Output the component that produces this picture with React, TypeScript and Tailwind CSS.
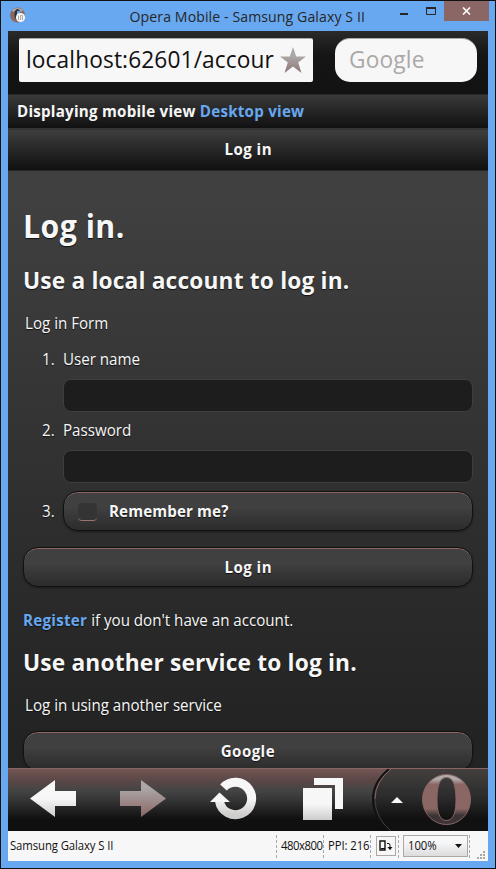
import React from "react";

function Narrow({ children, className = "" }: { children: React.ReactNode; className?: string }) {
  return <span className={`inline-block origin-left scale-x-[0.945] whitespace-nowrap ${className}`}>{children}</span>;
}

function CenterLabel({ children }: { children: React.ReactNode }) {
  return <span className="inline-block scale-x-[0.94] tracking-[0.5px]">{children}</span>;
}

function TitleBar() {
  return (
    <div className="relative flex h-[30px] shrink-0 items-center justify-center text-[15px] text-[#262626]">
      <svg className="absolute left-[1px] top-[6px]" width="18" height="17" viewBox="0 0 18 17">
        <ellipse cx="8.500" cy="8" rx="7.500" ry="7.500" fill="#8a6664" />
        <path d="M3 3Q8-1 14 3L12 5Q8 2 4 5Z" fill="#aca8a8" />
        <ellipse cx="8.500" cy="7.500" rx="3" ry="5.500" fill="#303030" />
        <path d="M8 4v5l3-2V4Z" fill="#68a8f0" />
        <circle cx="11.500" cy="10.500" r="4.600" fill="#f7f7f7" />
        <path d="M9.500 13V8.500M11.500 13V8.500h2V13" stroke="#aca8a8" fill="none" />
      </svg>
      <span className="relative -left-px inline-block scale-x-[0.94] tracking-[0.1px]">Opera Mobile - Samsung Galaxy S II</span>
      <div className="absolute right-0 top-0 flex h-5">
        <svg width="45" height="20" viewBox="0 0 45 20">
          <path d="M1 12h8v2H1Z" fill="#262626" />
          <path d="M27.500 6.500h9v7h-9Z" fill="none" stroke="#262626" />
          <path d="M27 6h10v2h-10Z" fill="#262626" />
        </svg>
        <div className="flex h-5 w-[45px] items-center justify-center bg-[#8a6664]">
          <svg width="9" height="8" viewBox="0 0 9 8">
            <path d="M1 .5 8 7.500M8 .5 1 7.500" stroke="#f7f7f7" strokeWidth="1.700" />
          </svg>
        </div>
      </div>
    </div>
  );
}

function AddressBar() {
  return (
    <div className="flex h-[63px] shrink-0 items-start bg-linear-to-b from-[#2a2a2a] via-[#151515] via-40% to-[#121212] pl-[11px] pt-[7px] text-[24px]">
      <div className="flex h-[44px] w-[294px] items-center rounded-[2px] border-t border-[#aca8a8] bg-[#f7f7f7] pl-[7px] text-[#111]">
        <div className="w-[250px] pb-[3px]">
          <Narrow className="tracking-[0.13px]">localhost:62601/accour</Narrow>
        </div>
        <svg className="ml-[3px] shrink-0" width="28" height="28" viewBox="0 0 28 28">
          <defs>
            <linearGradient id="star" x2="0" y2="1">
              <stop offset=".35" stopColor="#aca8a8" />
              <stop offset="1" stopColor="#8c7472" />
            </linearGradient>
          </defs>
          <path d="M14 0 17.200 9.500H27L19.200 15.500 22.500 26 14 19.500 5.500 26 8.800 15.500 1 9.500H10.800Z" fill="url(#star)" />
        </svg>
      </div>
      <div className="ml-[22px] flex h-[44px] w-[142px] items-center rounded-[15px] border-t border-[#aca8a8] bg-[#f7f7f7] pb-[3px] pl-[14px] text-[#aca8a8]">
        <Narrow className="tracking-[0.2px]">Google</Narrow>
      </div>
    </div>
  );
}

function Button({ children, className = "" }: { children: React.ReactNode; className?: string }) {
  return (
    <div className={`flex h-10 shrink-0 items-center rounded-[15px] border border-[#111] bg-linear-to-b from-[#404040] from-40% to-[#2c2c2c] font-bold shadow-[inset_0_1px_0_#8a6664,0_1px_2px_#1a1a1a] ${className}`}>
      {children}
    </div>
  );
}

function Field() {
  return <div className="h-[33px] w-full shrink-0 rounded-[8px] border border-[#3e3e3e] bg-[#1d1d1d]" />;
}

function PageBody() {
  return (
    <div className="flex h-[597px] shrink-0 flex-col overflow-hidden bg-linear-to-b from-[#404040] from-5% via-[#313131] via-50% to-[#232323] to-95% px-[15px] text-[16px] text-[#f7f7f7] [text-shadow:0_1px_1px_#111]">
      <h1 className="mt-[35px] h-10 shrink-0 text-[32px] font-bold leading-10 tracking-[0.5px]">
        <Narrow>Log in.</Narrow>
      </h1>
      <h2 className="mt-[18px] h-8 shrink-0 text-[24px] font-bold leading-8 tracking-[0.2px]">
        <Narrow>Use a local account to log in.</Narrow>
      </h2>
      <div className="mt-[17px] h-5 shrink-0 pl-[2px] leading-5">
        <Narrow>Log in Form</Narrow>
      </div>
      <ol className="flex shrink-0 flex-col pt-4">
        <li className="flex">
          <span className="w-[40px] shrink-0 pl-[19px] leading-5">
            <Narrow>1.</Narrow>
          </span>
          <div className="flex flex-1 flex-col gap-[10px]">
            <label className="h-5 leading-5">
              <Narrow>User name</Narrow>
            </label>
            <Field />
          </div>
        </li>
        <li className="mt-[8px] flex">
          <span className="w-[40px] shrink-0 pl-[19px] leading-5">
            <Narrow>2.</Narrow>
          </span>
          <div className="flex flex-1 flex-col gap-[10px]">
            <label className="h-5 leading-5">
              <Narrow>Password</Narrow>
            </label>
            <Field />
          </div>
        </li>
        <li className="mt-[8px] flex items-center">
          <span className="w-[40px] shrink-0 pl-[19px] leading-5">
            <Narrow>3.</Narrow>
          </span>
          <Button className="flex-1 pl-[14px]">
            <span className="mr-[12px] mt-[2px] h-[18px] w-[19px] rounded-[4px] border-b border-[#9a7472] bg-[#343434]" />
            <Narrow className="tracking-[0.15px]">Remember me?</Narrow>
          </Button>
        </li>
      </ol>
      <Button className="mt-4 justify-center">
        <CenterLabel>Log in</CenterLabel>
      </Button>
      <p className="mt-[23px] h-5 shrink-0 leading-5">
        <Narrow>
          <b className="tracking-[0.3px] text-[#68a8f0]">Register</b> if you don't have an account.
        </Narrow>
      </p>
      <h2 className="mt-4 h-8 shrink-0 text-[24px] font-bold leading-8 tracking-[0.2px]">
        <Narrow>Use another service to log in.</Narrow>
      </h2>
      <div className="mt-[17px] h-5 shrink-0 pl-[2px] leading-5">
        <Narrow>Log in using another service</Narrow>
      </div>
      <Button className="mt-4 justify-center">
        <CenterLabel>Google</CenterLabel>
      </Button>
    </div>
  );
}

function NavBar() {
  return (
    <svg className="block shrink-0" width="480" height="63" viewBox="8 768 480 63">
      <defs>
        <linearGradient id="bar" x2="0" y2="1">
          <stop offset="0" stopColor="#755756" />
          <stop offset=".2" stopColor="#5a4746" />
          <stop offset=".36" stopColor="#444" />
          <stop offset=".5" stopColor="#363636" />
          <stop offset=".8" stopColor="#111" />
          <stop offset="1" stopColor="#0e0e0e" />
        </linearGradient>
        <linearGradient id="panel" x2="0" y2="1">
          <stop offset="0" stopColor="#454040" />
          <stop offset=".45" stopColor="#2c2c2c" />
          <stop offset=".8" stopColor="#111" />
        </linearGradient>
        <linearGradient id="light" x2="0" y2="1">
          <stop offset=".5" stopColor="#f7f7f7" />
          <stop offset="1" stopColor="#cfcccc" />
        </linearGradient>
        <linearGradient id="dim" x2="0" y2="1">
          <stop offset=".2" stopColor="#aca8a8" />
          <stop offset="1" stopColor="#8a6664" />
        </linearGradient>
        <linearGradient id="opera" x2="0" y2="1">
          <stop offset="0" stopColor="#b5aeae" />
          <stop offset=".1" stopColor="#aca8a8" />
          <stop offset=".2" stopColor="#8a6664" />
          <stop offset=".68" stopColor="#8a6664" />
          <stop offset=".82" stopColor="#3a3434" />
        </linearGradient>
      </defs>
      <path d="M8 768h480v63H8Z" fill="url(#bar)" />
      <path d="M391 768Q374 782 374 799T391 831H488V768Z" fill="url(#panel)" />
      <path d="M389 769Q373 782 373 799T389 831" fill="none" stroke="#111" strokeWidth="2" />
      <path d="M391 769Q375 782 375 799" fill="none" stroke="#8a6664" />
      <path d="M375 799Q375 818 391 831" fill="none" stroke="#404040" />
      <path d="M8 768.500H488" stroke="#8a6664" />
      <path d="M30 798.500 55 780V791H76V806H55V817Z" fill="url(#light)" />
      <path d="M166 798.500 141 780V791H120V806H141V817Z" fill="url(#dim)" />
      <path d="M223.500 787.500A16.200 16.200 0 1 1 219.500 801.500" fill="none" stroke="url(#light)" strokeWidth="9" />
      <path d="M210 802 219.500 792.500 230 802Z" fill="#f7f7f7" />
      <path d="M314 778H343V809H335V785H314Z" fill="#f7f7f7" />
      <path d="M303 788H332V820H303Z" fill="url(#light)" />
      <path d="M391 803 397 797 403 803Z" fill="#f7f7f7" />
      <path fillRule="evenodd" d="M446.500 774.500A24 25 0 1 1 446.500 824.500A24 25 0 1 1 446.500 774.500ZM446.500 777.500C439 777.500 437 788 437 799.500S439 820.500 446.500 820.500S456 811 456 799.500S454 777.500 446.500 777.500Z" fill="url(#opera)" stroke="#8a6664" />
    </svg>
  );
}

function StatusBar() {
  return (
    <div className="relative flex h-[30px] shrink-0 items-center bg-[#f7f7f7] pl-[2px] text-[12px] tracking-[-0.1px] text-[#111]">
      <span className="w-[266px]">
        <Narrow>Samsung Galaxy S II</Narrow>
      </span>
      <div className="flex h-[23px] w-[47px] items-center border-l border-dashed border-[#aca8a8] pl-[4px]">
        <Narrow className="tracking-[-0.5px]">480x800</Narrow>
      </div>
      <div className="flex h-[23px] w-[48px] items-center border-x border-dashed border-[#aca8a8] pl-[4px]">
        <Narrow>PPI: 216</Narrow>
      </div>
      <div className="ml-[5px] flex h-5 w-5 items-center justify-center border border-[#aca8a8]">
        <svg width="14" height="12" viewBox="0 0 14 12">
          <path d="M1 1h5v9H1Z" fill="none" stroke="#111" strokeWidth="1.400" />
          <path d="M2 8.500h4M8 3.500h2q1 0 1 2v4" fill="none" stroke="#111" />
          <path d="M8.500 7 11 10 13.500 7Z" fill="#111" />
        </svg>
      </div>
      <div className="ml-[2px] h-[23px] border-l border-dashed border-[#aca8a8]" />
      <div className="ml-[4px] flex h-[22px] w-[65px] items-center justify-between border border-[#aca8a8] bg-linear-to-b from-[#f7f7f7] from-30% to-[#dddddd] pl-[4px] pr-[5px]">
        <Narrow>100%</Narrow>
        <svg width="7" height="4" viewBox="0 0 7 4">
          <path d="M0 0h7L3.500 4Z" fill="#111" />
        </svg>
      </div>
      <div className="ml-[1px] h-[23px] border-l border-dashed border-[#aca8a8]" />
      <svg className="absolute bottom-[2px] right-[3px]" width="8" height="8" viewBox="0 0 8 8">
        <path d="M6 0h2v2H6ZM3 3h2v2H3ZM6 3h2v2H6ZM0 6h2v2H0ZM3 6h2v2H3ZM6 6h2v2H6Z" fill="#aca8a8" />
      </svg>
    </div>
  );
}

export default function App() {
  return (
    <div className="flex h-[869px] w-[496px] flex-col overflow-hidden border border-[#111] bg-[#68a8f0] px-[7px] font-['Open_Sans',sans-serif]">
      <div className="-mr-[1px] flex flex-col">
        <TitleBar />
        <div className="flex w-[480px] flex-col">
          <AddressBar />
          <div className="flex h-9 shrink-0 items-center border-b-2 border-t border-t-[#262626] border-b-[#333] bg-linear-to-b from-[#3a3a3a] to-[#111] pb-px pl-[9px] text-[16px] font-bold tracking-[0.26px] text-[#f7f7f7]">
            <Narrow>
              Displaying mobile view <span className="text-[#68a8f0]">Desktop view</span>
            </Narrow>
          </div>
          <div className="flex h-[41px] shrink-0 items-center justify-center border-b border-[#262626] bg-linear-to-b from-[#3e3e3e] to-[#111] pb-[2px] text-[16px] font-bold text-[#f7f7f7]">
            <CenterLabel>Log in</CenterLabel>
          </div>
          <PageBody />
          <NavBar />
          <StatusBar />
        </div>
      </div>
    </div>
  );
}
